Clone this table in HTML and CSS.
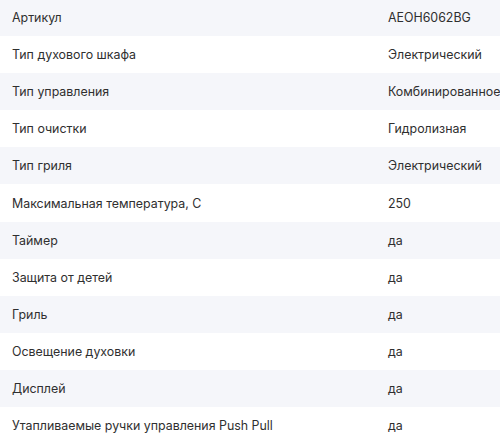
FILE: index.html
```html
<!DOCTYPE html>
<html lang="ru">
<head>
<meta charset="utf-8">
<link rel="stylesheet" href="styles.css">
</head>
<body>
<div class="specs">
  <div class="row"><div class="name">Артикул</div><div class="val">AEOH6062BG</div></div>
  <div class="row"><div class="name">Тип духового шкафа</div><div class="val">Электрический</div></div>
  <div class="row"><div class="name">Тип управления</div><div class="val">Комбинированное</div></div>
  <div class="row"><div class="name">Тип очистки</div><div class="val">Гидролизная</div></div>
  <div class="row"><div class="name">Тип гриля</div><div class="val">Электрический</div></div>
  <div class="row"><div class="name">Максимальная температура, С</div><div class="val">250</div></div>
  <div class="row"><div class="name">Таймер</div><div class="val">да</div></div>
  <div class="row"><div class="name">Защита от детей</div><div class="val">да</div></div>
  <div class="row"><div class="name">Гриль</div><div class="val">да</div></div>
  <div class="row"><div class="name">Освещение духовки</div><div class="val">да</div></div>
  <div class="row"><div class="name">Дисплей</div><div class="val">да</div></div>
  <div class="row"><div class="name">Утапливаемые ручки управления Push Pull</div><div class="val">да</div></div>
</div>
</body>
</html>
```
FILE: styles.css
```css
html, body {
  margin: 0;
  padding: 0;
  background: #ffffff;
  overflow: hidden;
}
.specs {
  margin-top: -1px;
  font-family: Inter, "Noto Sans", sans-serif;
  font-size: 12.4px;
  color: #2f2f2f;
}
.row {
  display: grid;
  grid-template-columns: 388px 1fr;
  height: 37.1px;
  align-items: center;
}
.row:nth-child(odd) {
  background: #f5f6fa;
}
.name {
  padding-left: 12px;
  white-space: nowrap;
}
.val {
  white-space: nowrap;
}
```
